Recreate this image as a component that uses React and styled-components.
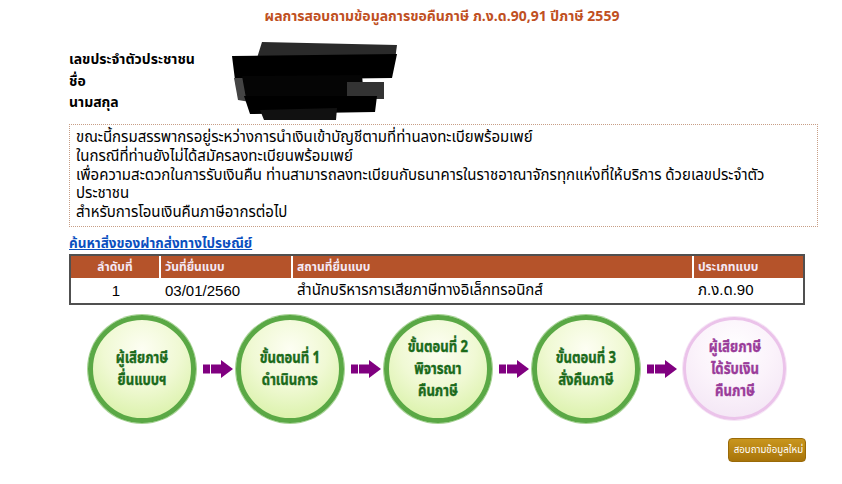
import React from 'react';
import styled, { createGlobalStyle } from 'styled-components';

const GlobalStyle = createGlobalStyle`
  body {
    margin: 0;
    background: #ffffff;
    font-family: Tahoma, "Noto Sans Thai", "Noto Sans", "DejaVu Sans", sans-serif;
  }
`;

const Page = styled.div`
  width: 842px;
  height: 484px;
  padding: 6px 0 0 69px;
  box-sizing: border-box;
`;

const Title = styled.h1`
  margin: 0 0 0 -69px;
  width: 884px;
  text-align: center;
  font-size: 14px;
  font-weight: bold;
  line-height: 22px;
  color: #c0501f;
`;

const Info = styled.div`
  position: relative;
  margin-top: 21px;
  height: 69px;
`;

const InfoLabel = styled.div`
  font-size: 14px;
  font-weight: bold;
  line-height: 21.5px;
  color: #000;
`;

const Redaction = styled.svg`
  position: absolute;
  left: 163px;
  top: -7px;
`;

const Notice = styled.div`
  margin-top: 6px;
  width: 749px;
  box-sizing: border-box;
  border: 1px dotted #c79e86;
  padding: 4px 6px 3px 6px;
  font-size: 15px;
  line-height: 18.8px;
  color: #000;
`;

const NoticeLine = styled.div`
  min-height: 18.8px;
`;

const LinkRow = styled.div`
  padding-top: 4px;
  height: 20px;
`;

const MailLink = styled.a`
  font-size: 13.5px;
  font-weight: bold;
  line-height: 20px;
  color: #0b4fbf;
  text-decoration: underline;
`;

const Table = styled.table`
  margin-top: 3px;
  width: 736px;
  border: 2px solid #505050;
  border-collapse: separate;
  border-spacing: 0;
`;

const HeadCell = styled.th`
  background: #b5532a;
  color: #f4e8f6;
  font-size: 12px;
  font-weight: bold;
  height: 23px;
  padding: 0 4px;
  text-align: ${(p) => (p.center ? 'center' : 'left')};
  border-right: ${(p) => (p.last ? '0' : '2px solid #ffffff')};
  border-bottom: 1px solid #ffffff;
  width: ${(p) => p.w}px;
  box-sizing: border-box;
`;

const Cell = styled.td`
  font-family: "Liberation Sans", Arial, "Noto Sans Thai", sans-serif;
  font-size: 15px;
  height: 24px;
  padding: 0 4px;
  text-align: ${(p) => (p.center ? 'center' : 'left')};
  color: #000;
`;

const Steps = styled.div`
  display: flex;
  align-items: center;
  margin: 10px 0 0 19px;
`;

const Circle = styled.div`
  flex: none;
  width: ${(p) => (p.pink ? 103 : 108)}px;
  height: ${(p) => (p.pink ? 103 : 108)}px;
  border-radius: 50%;
  box-sizing: border-box;
  border: ${(p) => (p.pink ? '3px solid #ebc3ea' : '5px solid #5aa845')};
  background: ${(p) =>
    p.pink
      ? 'radial-gradient(circle at 50% 30%, #ffffff 0%, #fbf3fb 45%, #f1e2f3 100%)'
      : 'radial-gradient(circle at 50% 30%, #fdfef3 0%, #f0f9d4 45%, #d2ef9a 100%)'};
  box-shadow: 0 0 0 1px ${(p) => (p.pink ? '#f6e6f6' : '#a9d496')};
  display: flex;
  align-items: center;
  justify-content: center;
  color: ${(p) => (p.pink ? '#9a3c9a' : '#1b6a1b')};
`;

const CircleText = styled.span`
  display: inline-block;
  text-align: center;
  font-size: 16px;
  font-weight: bold;
  line-height: 22px;
  white-space: pre-line;
  -webkit-text-stroke: 0.4px currentColor;
  transform: scaleX(0.82);
`;

const ArrowIcon = styled.svg`
  flex: none;
  margin: 0 ${(p) => p.right}px 0 7px;
`;

const Footer = styled.div`
  display: flex;
  justify-content: flex-end;
  width: 737px;
  margin-top: 15px;
`;

const Button = styled.button`
  height: 24px;
  width: 78px;
  padding: 0;
  border: 1px solid #9a6a08;
  border-radius: 4px;
  background: linear-gradient(#c9961e, #a8740a);
  color: #ffffff;
  font-family: Tahoma, "Noto Sans Thai", sans-serif;
  font-size: 11px;
  line-height: 22px;
  white-space: nowrap;
`;

const ButtonText = styled.span`
  display: inline-block;
  transform: scaleX(0.88);
`;

const Arrow = ({ right }) => (
  <ArrowIcon right={right} width="30" height="18" viewBox="0 0 30 18">
    <rect x="0" y="4.5" width="7" height="9" fill="#800080" />
    <rect x="8" y="4.5" width="11" height="9" fill="#800080" />
    <polygon points="18,0 30,9 18,18" fill="#800080" />
  </ArrowIcon>
);

const labels = ['เลขประจำตัวประชาชน', 'ชื่อ', 'นามสกุล'];

const noticeLines = [
  'ขณะนี้กรมสรรพากรอยู่ระหว่างการนำเงินเข้าบัญชีตามที่ท่านลงทะเบียพร้อมเพย์',
  'ในกรณีที่ท่านยังไม่ได้สมัครลงทะเบียนพร้อมเพย์',
  'เพื่อความสะดวกในการรับเงินคืน ท่านสามารถลงทะเบียนกับธนาคารในราชอาณาจักรทุกแห่งที่ให้บริการ ด้วยเลขประจำตัวประชาชน',
  'สำหรับการโอนเงินคืนภาษีอากรต่อไป',
];

const steps = [
  'ผู้เสียภาษี\nยื่นแบบฯ',
  'ขั้นตอนที่ 1\nดำเนินการ',
  'ขั้นตอนที่ 2\nพิจารณา\nคืนภาษี',
  'ขั้นตอนที่ 3\nสั่งคืนภาษี',
];

export default function App() {
  return (
    <Page>
      <GlobalStyle />
      <Title>ผลการสอบถามข้อมูลการขอคืนภาษี ภ.ง.ด.90,91 ปีภาษี 2559</Title>

      <Info>
        {labels.map((l) => (
          <InfoLabel key={l}>{l}</InfoLabel>
        ))}
        {/* blacked-out personal data */}
        <Redaction width="166" height="78" viewBox="0 0 166 78">
          <polygon points="30,0 165,3 163,18 25,16" fill="#2a2a2a" />
          <polygon points="0,14 165,12 160,36 3,38" fill="#000000" />
          <polygon points="2,36 16,36 18,60 6,58" fill="#444444" />
          <polygon points="10,34 130,33 132,56 14,56" fill="#050505" />
          <polygon points="115,40 152,40 152,57 115,57" fill="#333333" />
          <polygon points="12,54 145,54 143,70 18,72" fill="#000000" />
          <polygon points="28,68 105,66 104,78 32,78" fill="#111111" />
        </Redaction>
      </Info>

      <Notice>
        {noticeLines.map((l) => (
          <NoticeLine key={l}>{l}</NoticeLine>
        ))}
      </Notice>

      <LinkRow>
        <MailLink href="#">ค้นหาสิ่งของฝากส่งทางไปรษณีย์</MailLink>
      </LinkRow>

      <Table>
        <thead>
          <tr>
            <HeadCell center w={90}>ลำดับที่</HeadCell>
            <HeadCell w={132}>วันที่ยื่นแบบ</HeadCell>
            <HeadCell w={401}>สถานที่ยื่นแบบ</HeadCell>
            <HeadCell last>ประเภทแบบ</HeadCell>
          </tr>
        </thead>
        <tbody>
          <tr>
            <Cell center>1</Cell>
            <Cell>03/01/2560</Cell>
            <Cell>สำนักบริหารการเสียภาษีทางอิเล็กทรอนิกส์</Cell>
            <Cell>ภ.ง.ด.90</Cell>
          </tr>
        </tbody>
      </Table>

      <Steps>
        {steps.map((s, i) => (
          <React.Fragment key={s}>
            <Circle>
              <CircleText>{s}</CircleText>
            </Circle>
            <Arrow right={i === steps.length - 1 ? 6 : 3} />
          </React.Fragment>
        ))}
        <Circle pink>
          <CircleText>{'ผู้เสียภาษี\nได้รับเงิน\nคืนภาษี'}</CircleText>
        </Circle>
      </Steps>

      <Footer>
        <Button>
          <ButtonText>สอบถามข้อมูลใหม่</ButtonText>
        </Button>
      </Footer>
    </Page>
  );
}
